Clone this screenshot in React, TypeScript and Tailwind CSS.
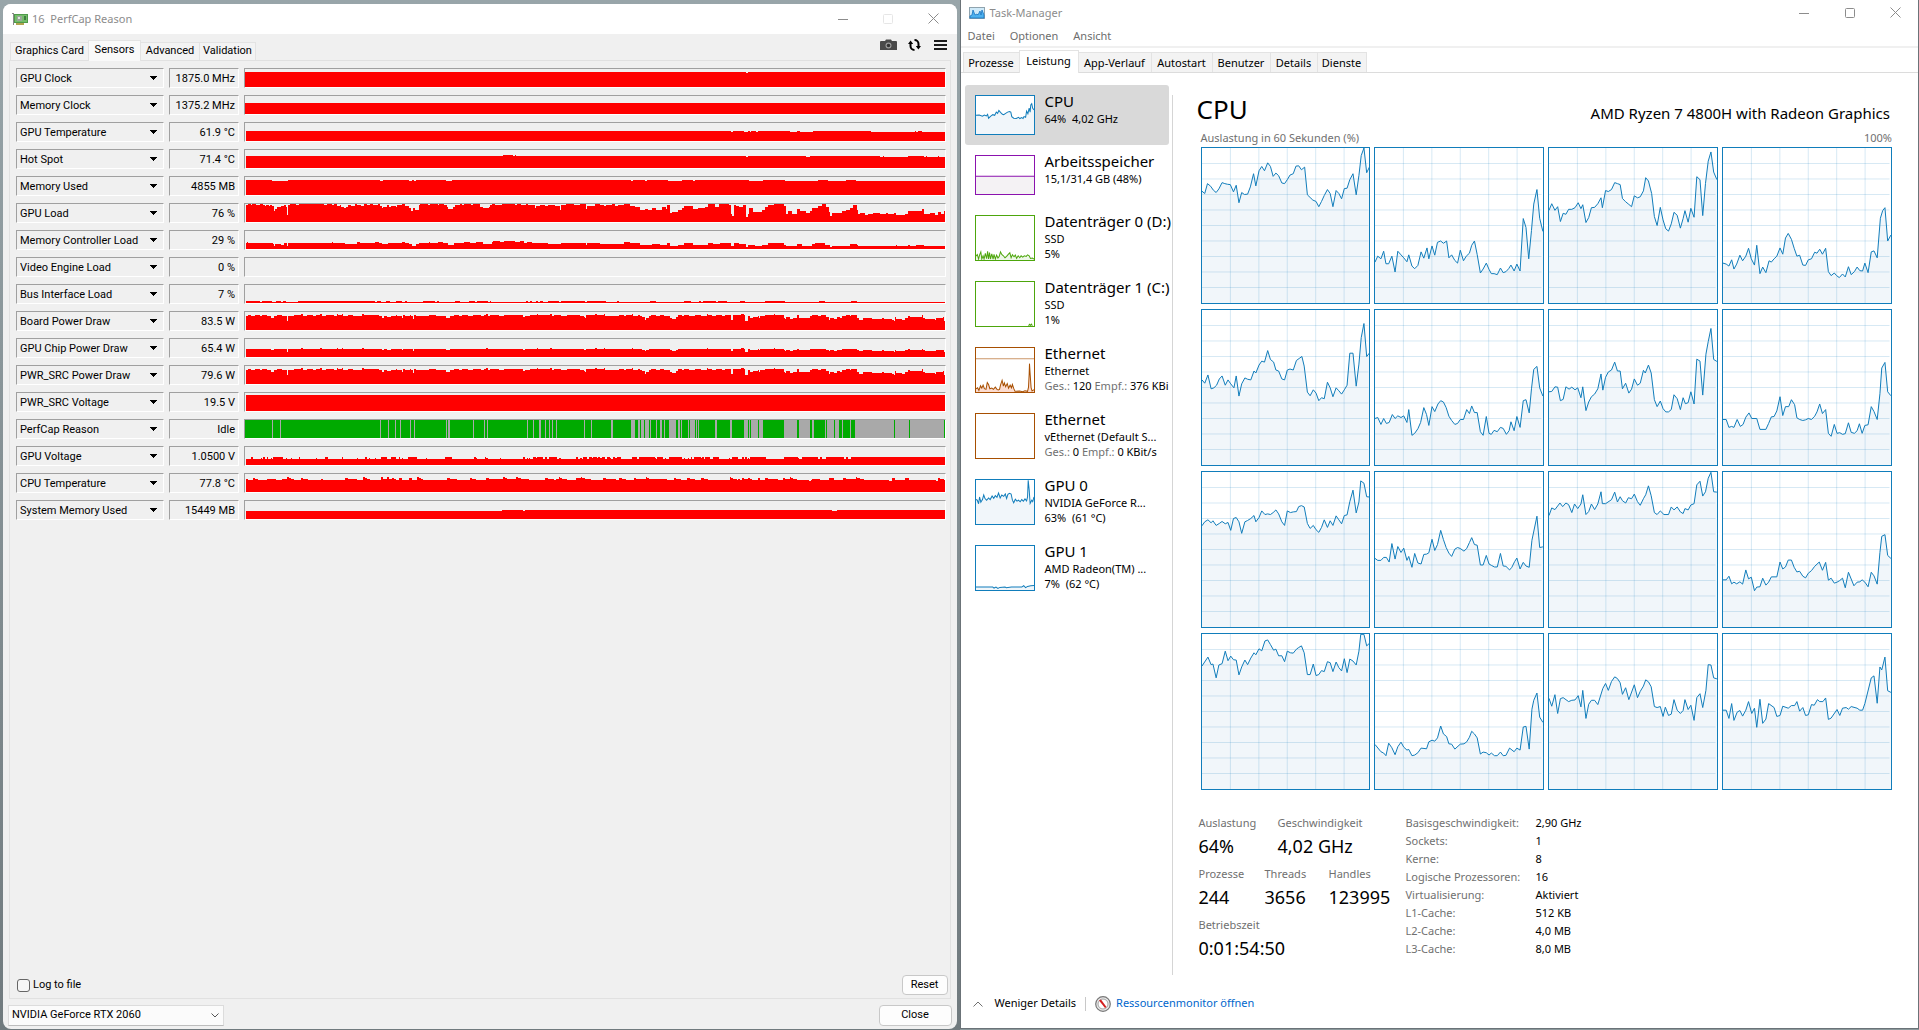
import React from "react";

/* ---------- Sensor history ---------- */

const TRACE_WIDTH = 2100;
const TRACE_HEIGHT = 54;

// Each trace is a list of "start,height" steps, split in two halves with their own origin.
type Trace = { a: string; b: string };

const BOARD_POWER: Trace = {
  a: "738,42 744,45 753,42 765,45 780,42 786,45 801,42 813,36 822,42 831,45 846,42 861,27 864,42 882,45 903,48 909,42 921,45 939,42 948,45 960,48 965,42 978,45 1002,42 1010,48 1014,45 1026,48 1030,42 1045,45 1060,42 1086,48 1092,45 1138,42 1146,36 1152,42 1160,39 1173,42 1188,45 1192,42 1205,36 1209,45 1215,42 1230,45 1233,42 1240,33 1243,45 1248,42 1287,45 1308,42 1338,36 1350,42 1362,45 1376,42 1386,45 1404,42 1420,45",
  b: "0,45 4,42 12,45 20,48 24,42 30,45 57,42 72,45 130,39 135,42 150,45 171,48 175,45 210,48 216,42 222,45 243,42 261,45 300,42 312,39 316,36 318,45 345,48 351,45 372,48 375,42 417,45 432,42 440,45 456,48 460,42 474,45 480,42 488,39 495,30 500,36 507,42 513,45 530,42 540,45 552,42 570,36 576,33 590,39 594,45 606,42 612,45 627,42 645,45 663,42 681,48 684,45 696,42 708,45 726,42 735,45 753,30 759,45 783,48 792,45 795,27 804,42 810,36 820,39 834,42 837,36 840,42 855,45 882,48 885,45 912,36 915,33 918,39 932,33 939,36 951,45 957,36 990,42 996,45 1014,42 1024,45 1040,39 1047,30 1050,36 1062,33 1071,39 1080,36 1086,42 1098,45 1110,42 1114,45 1131,36 1137,30 1150,36 1176,33 1206,36 1212,33 1236,30 1242,27 1245,39 1248,33 1266,30 1275,36 1284,42 1290,39 1326,45 1329,36 1335,33 1365,30 1368,36 1390,39 1392,27",
};

type Sensor = { name: string; value: string; trace?: Trace; scale?: number; flags?: boolean };

const SENSORS: Sensor[] = [
  { name: "GPU Clock", value: "1875.0 MHz", trace: { a: "735,45", b: "799,42 804,45" } },
  { name: "Memory Clock", value: "1375.2 MHz", trace: { a: "735,33", b: "" } },
  {
    name: "GPU Temperature",
    value: "61.9 °C",
    trace: {
      a: "738,30",
      b: "753,27 760,30 792,27 804,30 812,27 815,30 828,27 834,30 930,27 951,30 960,27 999,30 1173,27 1305,30 1308,27 1314,30 1326,27",
    },
  },
  {
    name: "Hot Spot",
    value: "71.4 °C",
    trace: {
      a: "738,36",
      b: "69,39 99,36 105,39 108,36 799,33 804,36 978,33 990,36 1200,33 1209,36 1212,33 1284,36 1332,33 1338,36 1341,33 1374,36 1377,33",
    },
  },
  {
    name: "Memory Used",
    value: "4855 MB",
    trace: {
      a: "738,45 816,42 864,45 1140,42 1149,45 1227,42 1236,45 1242,42 1248,45 1338,42 1356,45",
      b: "453,42 459,45 495,42 501,45 564,42 606,45 639,42 645,45 807,42 849,45 915,42 1014,45 1044,42 1098,45 1128,42",
    },
  },
  {
    name: "GPU Load",
    value: "76 %",
    trace: {
      a: "738,51 744,54 753,51 756,54 768,51 780,54 789,51 795,48 798,51 807,48 810,51 816,48 822,33 825,39 831,45 843,48 852,51 858,45 861,21 864,51 870,54 888,51 898,54 972,51 982,54 996,51 1002,54 1012,48 1020,51 1024,45 1032,42 1038,45 1044,51 1054,48 1066,54 1072,51 1084,48 1092,54 1102,51 1110,54 1120,51 1134,54 1140,48 1147,42 1150,45 1162,51 1168,45 1174,48 1188,45 1192,51 1206,54 1214,48 1226,42 1232,33 1238,42 1244,36 1256,51 1260,54 1284,51 1290,54 1314,51 1318,54 1332,51 1341,45 1344,39 1359,45 1365,51 1380,54 1386,51 1392,54 1412,51 1418,54",
      b: "0,45 10,42 27,45 30,51 36,54 45,51 66,54 105,51 111,54 123,51 138,54 144,51 165,42 168,48 180,51 195,48 204,51 225,48 240,36 243,51 258,54 282,51 300,54 318,39 321,48 345,54 360,51 372,48 378,51 396,54 405,48 414,51 432,54 452,48 465,45 480,36 495,39 505,36 516,42 530,36 546,45 558,39 561,51 570,27 576,30 594,36 606,42 612,48 639,39 655,42 676,45 684,54 705,45 718,54 748,51 753,24 756,18 762,51 768,48 777,45 789,51 798,15 804,24 808,42 820,30 846,36 855,45 864,51 882,54 912,48 918,24 924,33 936,24 951,39 960,33 978,27 990,33 996,42 1014,48 1026,54 1038,45 1047,30 1050,18 1056,27 1086,33 1098,36 1110,42 1119,51 1131,36 1134,24 1140,27 1155,21 1164,24 1181,27 1200,24 1218,27 1224,24 1242,27 1248,21 1275,24 1284,33 1326,39 1332,24 1350,27 1365,21 1374,30 1383,24 1392,33",
    },
  },
  {
    name: "Memory Controller Load",
    value: "29 %",
    trace: {
      a: "738,18 741,21 744,18 820,15 822,9 825,15 843,12 852,18 861,9 864,18 996,21 999,18 1035,15 1070,21 1080,18 1125,21 1137,18 1147,15 1165,18 1206,21 1214,18 1227,15 1236,9 1248,15 1256,18 1287,21 1290,18 1314,21 1330,18 1344,12 1362,18 1392,21 1410,18 1428,21",
      b: "0,21 10,15 36,21 40,24 60,21 72,24 105,21 120,24 132,18 141,21 156,18 205,15 243,18 318,12 321,18 360,15 432,21 450,18 480,12 516,15 540,12 561,18 570,9 594,12 612,18 639,12 684,18 700,15 720,18 753,9 762,18 777,15 798,6 806,12 825,9 846,12 864,18 912,12 920,9 951,15 966,9 996,15 1005,18 1035,12 1050,6 1056,9 1110,15 1131,12 1134,9 1248,12 1251,9 1284,12 1290,9 1310,12 1332,9",
    },
  },
  { name: "Video Engine Load", value: "0 %" },
  {
    name: "Bus Interface Load",
    value: "7 %",
    trace: {
      a: "738,6 780,3 786,6 816,3 828,6 843,3 849,6 858,3 894,6 1125,3 1131,6 1143,3 1158,6 1170,3 1188,6 1206,3 1215,6 1221,3 1269,6 1305,3 1311,6 1317,3 1365,6 1380,3 1407,6 1425,3 1431,6",
      b: "24,3 30,6 33,3 138,6 144,3 150,6 156,3 168,6 174,3 180,6 189,3 204,6 237,3 243,6 315,3 321,6 378,3 411,6 417,3 510,6 528,3 612,6 633,3 657,6 663,3 669,6 708,3 714,6 741,3 780,6 795,3 855,6 915,3 1017,6 1035,3 1113,6 1131,3",
    },
  },
  { name: "Board Power Draw", value: "83.5 W", trace: BOARD_POWER },
  { name: "GPU Chip Power Draw", value: "65.4 W", trace: BOARD_POWER, scale: 0.55 },
  { name: "PWR_SRC Power Draw", value: "79.6 W", trace: BOARD_POWER },
  { name: "PWR_SRC Voltage", value: "19.5 V", trace: { a: "738,48", b: "" } },
  {
    name: "PerfCap Reason",
    value: "Idle",
    flags: true,
    trace: {
      a: "735,54 816,0 819,54 840,0 843,54 1140,0 1143,54 1164,0 1167,54 1185,0 1188,54 1200,0 1203,54 1230,0 1233,54 1242,0 1245,54 1338,0 1341,54 1344,0 1350,54 1419,0 1422,54",
      b: "12,0 15,54 21,0 24,54 141,0 144,54 159,0 162,54 177,0 183,54 195,0 198,54 207,0 210,54 216,0 219,54 228,0 231,54 312,0 315,54 333,0 336,54 393,0 399,54 453,0 465,54 474,0 480,54 483,0 492,54 495,0 507,54 510,0 513,54 528,0 531,54 540,0 546,54 552,0 555,54 567,0 588,54 594,0 600,54 603,0 606,54 624,0 627,54 630,0 645,54 648,0 651,54 654,0 657,54 705,0 711,54 750,0 756,54 792,0 804,54 807,0 810,54 813,0 834,54 837,0 849,54 912,0 951,54 957,0 990,54 996,0 1002,54 1035,0 1038,54 1041,0 1062,54 1065,0 1077,54 1086,0 1089,54 1110,0 1113,54 1125,0 1242,54 1245,0 1287,54 1290,0 1392,54",
    },
  },
  {
    name: "GPU Voltage",
    value: "1.0500 V",
    trace: {
      a: "738,18 753,24 759,18 783,21 786,18 789,24 795,18 801,24 804,18 813,21 816,18 819,24 849,18 858,21 861,18 873,21 876,18 897,24 900,18 948,21 952,18 975,24 984,18 1026,24 1029,18 1071,21 1074,18 1095,24 1101,18 1107,21 1110,18 1125,21 1128,18 1143,24 1161,18 1173,24 1188,18 1197,24 1200,18 1206,21 1209,18 1224,24 1251,18 1278,21 1281,18 1335,24 1356,18 1422,24 1428,21 1431,18",
      b: "15,24 18,21 24,18 60,21 63,18 129,24 135,18 141,21 144,18 147,21 150,18 159,24 168,21 171,24 189,18 195,24 201,18 207,24 231,18 237,21 243,18 288,24 294,18 300,21 306,18 309,24 321,18 327,24 336,21 339,24 351,21 354,24 360,21 366,24 375,18 381,24 390,21 393,18 399,24 405,21 411,24 423,18 456,24 471,18 477,24 525,21 528,18 531,24 549,18 555,21 558,18 567,24 606,18 612,21 615,18 624,21 627,18 633,24 636,18 642,24 663,21 666,24 672,18 675,24 690,18 699,24 717,18 747,21 750,18 756,24 774,18 786,24 792,18 795,24 801,18 804,21 807,18 810,24 858,18 912,24 954,21 957,18 966,24 1014,18 1020,24 1026,18 1038,24 1092,18 1098,24 1104,18 1113,24",
    },
  },
  {
    name: "CPU Temperature",
    value: "77.8 °C",
    trace: {
      a: "738,39 744,36 759,42 765,39 774,36 801,39 828,36 846,39 861,45 867,42 873,39 882,36 903,42 909,39 924,36 963,39 969,36 1035,42 1044,39 1072,36 1089,45 1095,42 1101,39 1110,36 1143,45 1149,39 1161,45 1167,39 1176,42 1182,39 1188,36 1197,42 1206,36 1227,42 1236,36 1251,45 1257,42 1263,39 1269,36 1341,42 1350,39 1371,36 1410,42 1416,39 1428,36",
      b: "18,42 27,39 69,45 75,42 81,39 108,45 114,42 123,39 147,36 195,42 204,39 222,36 228,39 237,45 240,42 246,39 261,36 288,42 303,45 306,42 315,39 333,36 369,42 378,39 408,36 417,42 426,39 438,36 462,42 468,39 498,45 501,42 507,39 561,36 582,42 588,39 603,36 621,42 630,39 645,36 663,42 672,39 684,36 750,45 753,42 759,39 771,36 774,39 780,36 786,42 792,39 804,42 810,39 816,36 834,42 840,36 855,42 864,39 894,36 909,42 915,39 930,45 933,42 939,39 951,36 987,33 993,36 996,39 1020,36 1047,42 1062,36 1089,42 1098,39 1128,45 1131,42 1140,39 1152,36 1227,33 1236,42 1245,36 1275,42 1287,36 1368,33 1374,42 1380,39 1392,36",
    },
  },
  { name: "System Memory Used", value: "15449 MB", trace: { a: "738,24", b: "66,27 129,24 135,27 1056,24 1071,27" } },
];

function tracePath(trace: Trace, scale = 1): string {
  const read = (text: string, shift: number) =>
    text
      .split(" ")
      .filter(Boolean)
      .map((pair) => {
        const [x, h] = pair.split(",").map(Number);
        return [x + shift, Math.round((h * scale) / 3) * 3];
      });
  const steps = [...read(trace.a, -735), ...read(trace.b, 705)];
  let d = `M${steps[0][0]} ${TRACE_HEIGHT}`;
  for (const [x, h] of steps) d += `H${x}V${TRACE_HEIGHT - h}`;
  return `${d}H${TRACE_WIDTH}V${TRACE_HEIGHT}Z`;
}

const INSET = "border border-t-[#a0a0a0] border-l-[#a0a0a0] border-r-white border-b-white";

function SensorRow({ sensor }: { sensor: Sensor }) {
  return (
    <div className="flex h-5 items-stretch">
      <div className={`relative w-[148px] ${INSET}`}>
        <select
          aria-label={sensor.name}
          className="block h-full w-full appearance-none bg-transparent pt-px pl-[3px] text-[11px] leading-4 outline-none"
        >
          <option>{sensor.name}</option>
        </select>
        <svg className="pointer-events-none absolute top-[7px] right-[6px]" width="7" height="4" viewBox="0 0 7 4" shapeRendering="crispEdges">
          <path d="M0 0H7V1H6V2H5V3H4V4H3V3H2V2H1V1H0Z" fill="#000" />
        </svg>
      </div>
      <output className={`ml-[5px] w-[70px] pt-px pr-[3px] text-right text-[11px] leading-[17px] whitespace-nowrap ${INSET}`}>{sensor.value}</output>
      <div className={`ml-[5px] min-w-0 flex-1 ${INSET} ${sensor.flags ? "bg-[#a9a9a9]" : ""}`}>
        {sensor.trace && (
          <svg className="block h-[18px] w-full" viewBox={`0 0 ${TRACE_WIDTH} ${TRACE_HEIGHT}`} preserveAspectRatio="none" shapeRendering="crispEdges">
            <path d={tracePath(sensor.trace, sensor.scale)} fill={sensor.flags ? "#00aa00" : "#ff0000"} />
          </svg>
        )}
      </div>
    </div>
  );
}

/* ---------- Window chrome ---------- */

function CaptionButtons({ className, faded }: { className: string; faded?: boolean }) {
  return (
    <div className={`flex text-[#8c8c8c] ${className}`}>
      <button aria-label="Minimieren" className="flex w-[46px] items-center justify-center">
        <svg width="10" height="10" viewBox="0 0 10 10" shapeRendering="crispEdges">
          <path d="M0 5.5H10" stroke="currentColor" />
        </svg>
      </button>
      <button aria-label="Maximieren" className={`flex w-[45px] items-center justify-center ${faded ? "text-[#e6e6e6]" : ""}`}>
        <svg width="10" height="10" viewBox="0 0 10 10" fill="none">
          <rect x="0.5" y="0.5" width="9" height="9" rx="1" stroke="currentColor" />
        </svg>
      </button>
      <button aria-label="Schließen" className="flex w-[46px] items-center justify-center">
        <svg width="11" height="11" viewBox="0 0 11 11">
          <path d="M0.5 0.5L10.5 10.5M10.5 0.5L0.5 10.5" stroke="currentColor" />
        </svg>
      </button>
    </div>
  );
}

/* ---------- GPU-Z ---------- */

function CardIcon() {
  return (
    <svg width="16" height="14" viewBox="0 0 16 14">
      <path d="M0 1h2v12H1V2H0z" fill="#8a8a8a" />
      <rect x="2" y="2" width="14" height="9" fill="#4f9a4b" />
      <rect x="3" y="3" width="12" height="7" fill="#74bd6a" />
      <rect x="5" y="4" width="5" height="5" fill="#9aa79a" />
      <rect x="6" y="5" width="2" height="2" fill="#dfe6df" />
      <rect x="12" y="4" width="2" height="4" fill="#3f7d3f" />
      <rect x="4" y="11" width="8" height="2" fill="#b2a54f" />
    </svg>
  );
}

const GPUZ_TABS = [
  { label: "Graphics Card", width: "w-[78px]" },
  { label: "Sensors", width: "w-[53px]" },
  { label: "Advanced", width: "w-[59px]" },
  { label: "Validation", width: "w-[56px]" },
];

function GpuZWindow() {
  return (
    <section className="flex flex-1 flex-col overflow-hidden rounded-lg bg-[#f0f0f0] font-['Roboto',sans-serif] text-[11px] text-black">
      <header className="flex h-[30px] shrink-0 items-stretch bg-white">
        <div className="flex flex-1 items-center pl-[9px]">
          <CardIcon />
          <h1 className="ml-1 font-['Noto_Sans',sans-serif] text-[11px] whitespace-pre text-[#8c8c8c]">{"16  PerfCap Reason"}</h1>
        </div>
        <CaptionButtons className="pb-px" faded />
      </header>

      <div className="flex h-[26px] shrink-0 items-end px-[7px]">
        <div role="tablist" className="flex flex-1 items-end">
          {GPUZ_TABS.map((tab, i) =>
            i === 1 ? (
              <button key={tab.label} role="tab" aria-selected className={`relative z-10 -mb-px h-[21px] border border-b-0 border-[#e3e3e3] bg-[#f9f9f9] pb-[2px] text-[11px] ${tab.width}`}>
                {tab.label}
              </button>
            ) : (
              <button key={tab.label} role="tab" className={`h-[18px] border border-b-0 border-[#e3e3e3] bg-[#f3f3f3] text-[11px] whitespace-nowrap ${i === 0 ? "border-r-0" : "border-l-0"} ${tab.width}`}>
                {tab.label}
              </button>
            )
          )}
        </div>
        <div className="flex items-center gap-[11px] self-start pt-[5px] pr-[3px]">
          <button aria-label="Screenshot">
            <svg width="17" height="12" viewBox="0 0 17 12">
              <path d="M1 2h4l1-1.500h5L12 2h4a1 1 0 011 1v8H0V3a1 1 0 011-1z" fill="#4a4a4a" />
              <circle cx="8.500" cy="6.500" r="3" fill="#9a9a9a" />
              <circle cx="8.500" cy="6.500" r="1.800" fill="#333" />
            </svg>
          </button>
          <button aria-label="Refresh">
            <svg width="13" height="12" viewBox="0 0 13 12" fill="none" stroke="#000" strokeWidth="2">
              <path d="M2.500 4.500V7a4 4 0 004 4M6.500 1a4 4 0 014 4v2.500" />
              <path d="M0 5L2.600 1.500L5.200 5zM7.800 7L10.400 10.500L13 7z" fill="#000" stroke="none" />
            </svg>
          </button>
          <button aria-label="Menu" className="ml-[2px]">
            <svg width="13" height="12" viewBox="0 0 13 12" shapeRendering="crispEdges">
              <path d="M0 1h13v2H0zM0 5h13v2H0zM0 9h13v2H0z" fill="#1a1a1a" />
            </svg>
          </button>
        </div>
      </div>

      <div className="mx-[6px] flex flex-1 flex-col border border-[#e1e1e1] pb-[3px]">
        <div className="flex flex-col gap-[7px] pt-[7px] pr-[4px] pl-[6px]">
          {SENSORS.map((sensor) => (
            <SensorRow key={sensor.name} sensor={sensor} />
          ))}
        </div>
        <div className="mt-auto flex items-center justify-between pr-[2px] pl-[7px]">
          <label className="flex items-center gap-[3px]">
            <input type="checkbox" className="h-[13px] w-[13px] appearance-none rounded-[3px] border border-[#666] bg-[#f6f6f6]" />
            Log to file
          </label>
          <button className="h-5 w-[46px] rounded-[4px] border border-[#c8c8c8] bg-[#fdfdfd]">Reset</button>
        </div>
      </div>

      <footer className="flex h-[30px] shrink-0 items-start justify-between px-[5px] pt-[6px]">
        <div className="relative">
          <select aria-label="Grafikkarte" className="block h-[21px] w-[216px] appearance-none border border-[#dcdcdc] border-b-[#bdbdbd] bg-[#fbfbfb] pl-[3px] text-[11px]">
            <option>NVIDIA GeForce RTX 2060</option>
          </select>
          <svg className="pointer-events-none absolute top-2 right-[5px]" width="8" height="5" viewBox="0 0 8 5" fill="none" stroke="#555">
            <path d="M0.500 0.500L4 4L7.500 0.500" />
          </svg>
        </div>
        <button className="h-[21px] w-[73px] rounded-[4px] border border-[#c8c8c8] bg-[#fdfdfd]">Close</button>
      </footer>
    </section>
  );
}

/* ---------- Task manager ---------- */

const CORE_COLUMNS = [23, 402, 781, 1160];
const CORE_ROWS = [52, 536, 31, 517];
const CORE_LINES = [
  "23,183 29,190 35,160 42,168 48,180 54,187 60,176 67,157 73,160 79,162 85,163 92,185 98,165 104,218 110,187 116,193 123,192 129,170 136,130 141,167 148,121 154,108 160,121 167,97 173,108 179,138 185,128 191,136 198,158 204,160 210,148 216,134 223,130 229,107 235,106 241,118 248,110 254,194 260,202 266,210 273,214 279,230 285,214 291,196 298,178 304,190 310,230 317,181 323,190 329,206 335,175 341,174 347,148 354,130 361,194 367,135 372,75 378,52 384,127 391,107",
  "402,398 408,380 415,388 421,365 426,403 432,403 439,380 446,428 452,365 459,376 465,385 472,397 476,376 483,410 489,418 496,408 503,367 509,386 516,355 520,388 527,349 533,377 539,338 546,334 552,341 559,334 564,385 570,376 577,393 583,401 589,362 596,394 602,380 609,371 614,347 620,334 626,375 633,431 639,419 646,401 652,420 657,433 663,433 670,436 677,416 683,430 689,427 695,418 700,407 707,425 713,404 720,425 727,266 733,293 739,388 745,302 750,222 757,178 763,265 770,305",
  "781,241 787,221 794,241 800,230 806,275 812,250 818,253 824,238 831,238 838,233 845,218 851,236 855,224 862,278 868,263 874,233 881,232 888,221 895,203 898,233 905,181 911,184 918,178 925,157 931,160 937,163 942,205 949,215 956,223 962,230 968,197 975,203 981,200 988,182 993,142 999,152 1006,190 1012,260 1018,287 1025,232 1031,270 1037,297 1043,304 1049,282 1055,247 1062,256 1069,295 1075,266 1079,242 1086,277 1092,235 1099,262 1105,139 1112,148 1118,257 1124,160 1130,92 1136,64 1142,125 1149,148",
  "1160,401 1167,404 1173,410 1179,391 1184,419 1190,404 1197,377 1203,394 1210,380 1216,356 1222,388 1229,407 1234,347 1241,433 1247,413 1254,430 1261,394 1266,398 1272,388 1278,380 1285,355 1291,374 1297,325 1303,311 1310,329 1316,356 1322,380 1328,377 1335,407 1341,408 1347,391 1354,388 1361,368 1366,371 1372,359 1378,374 1385,356 1391,427 1397,439 1404,431 1409,439 1415,445 1422,434 1428,443 1435,412 1441,436 1448,427 1454,413 1460,424 1466,425 1471,401 1478,430 1485,367 1491,364 1498,385 1505,265 1510,242 1515,233 1521,334 1528,316",
  "23,748 29,758 36,733 43,775 49,772 55,764 61,745 67,736 74,764 80,748 86,760 93,772 98,736 104,797 110,760 117,742 123,746 130,748 137,721 141,727 148,703 154,691 160,694 167,659 173,686 180,694 185,718 191,721 198,745 204,748 210,718 216,715 223,718 230,689 236,683 242,677 247,706 254,785 260,796 267,778 273,788 279,811 285,802 291,805 298,755 304,772 310,799 317,772 323,781 329,791 335,778 341,764 347,667 354,667 361,767 367,700 372,620 378,577 384,677 391,665",
  "402,865 408,862 415,883 421,865 427,880 433,877 440,853 446,865 452,857 459,862 465,857 472,877 476,838 483,916 489,910 496,896 502,877 509,832 515,853 520,886 527,829 533,844 540,821 546,811 552,815 558,832 564,858 570,871 577,883 583,880 589,868 596,868 603,838 609,850 614,827 620,847 626,847 633,905 639,916 646,859 652,910 657,913 663,901 670,905 677,892 683,895 690,913 696,902 700,875 707,902 713,859 720,892 727,811 733,808 740,848 745,775 750,716 757,707 763,772 770,797",
  "781,784 787,783 794,769 800,770 806,811 812,807 818,769 825,776 831,770 838,778 844,772 851,802 855,769 862,841 868,815 874,799 881,791 888,775 895,730 899,779 905,740 911,724 918,718 925,694 931,721 937,721 942,775 949,758 956,788 962,776 968,745 975,764 981,758 988,719 992,727 999,703 1005,727 1012,808 1018,829 1025,812 1031,835 1037,845 1043,845 1049,838 1055,793 1062,805 1069,838 1075,802 1080,820 1086,817 1092,784 1099,821 1105,685 1112,691 1118,794 1125,670 1130,632 1136,592 1142,686 1149,692",
  "1160,868 1167,868 1173,892 1179,889 1184,892 1191,868 1198,889 1204,883 1210,861 1217,848 1223,865 1234,865 1241,898 1254,898 1260,880 1266,860 1272,859 1278,842 1285,799 1291,856 1297,829 1304,829 1310,808 1317,823 1322,863 1328,868 1335,871 1341,869 1347,865 1354,868 1361,858 1366,845 1372,821 1378,850 1385,838 1391,910 1397,919 1404,883 1410,910 1416,908 1422,913 1428,911 1435,878 1441,907 1448,910 1454,902 1459,881 1465,910 1471,886 1478,884 1485,829 1491,844 1498,868 1504,790 1508,712 1515,695 1521,784 1528,796",
  "23,194 29,182 36,176 43,185 47,179 54,193 61,187 67,181 74,188 80,184 86,208 92,172 98,169 104,182 110,217 117,182 123,178 130,172 137,163 141,182 148,169 154,149 161,160 167,158 173,160 179,154 185,146 191,158 198,182 204,193 210,149 217,154 223,152 230,151 235,136 241,133 247,137 254,187 260,202 267,193 273,206 279,214 285,199 291,176 298,199 304,179 310,193 317,164 323,176 329,188 335,163 341,161 347,121 354,86 361,155 367,122 371,58 378,65 384,106 391,107",
  "402,293 408,299 415,299 421,290 427,290 433,304 439,248 446,295 452,257 459,275 465,262 472,299 476,287 483,320 489,278 496,307 503,310 509,281 515,280 520,276 527,235 533,269 539,251 546,208 552,236 558,260 564,277 570,287 577,265 583,260 589,263 597,271 603,263 609,245 614,230 620,251 626,253 633,313 639,313 646,284 652,310 657,314 664,319 670,319 677,278 683,316 689,317 697,328 702,320 708,303 713,292 720,325 727,305 733,316 740,320 746,238 757,165 763,260 770,258",
  "781,163 787,140 794,145 805,125 811,136 818,125 824,130 831,154 837,128 844,142 851,128 855,100 862,160 868,151 874,128 881,145 888,128 895,91 898,127 905,127 918,115 925,92 931,122 937,106 942,118 949,125 955,109 962,112 968,98 975,121 981,132 988,112 993,100 999,73 1005,103 1012,154 1018,160 1025,149 1033,160 1043,160 1049,137 1055,146 1062,137 1069,152 1075,157 1079,142 1086,146 1092,131 1099,127 1105,70 1112,59 1118,104 1124,91 1130,50 1136,32 1142,91 1149,92",
  "1160,358 1167,358 1173,347 1179,370 1184,365 1190,370 1197,364 1203,371 1210,328 1216,355 1222,350 1229,391 1234,380 1241,379 1247,353 1254,374 1260,365 1266,349 1278,349 1285,304 1291,325 1297,319 1303,298 1310,298 1316,320 1322,334 1328,332 1335,347 1341,352 1347,338 1354,330 1361,317 1371,304 1378,329 1385,305 1391,359 1397,353 1404,368 1410,365 1415,361 1422,353 1428,382 1435,335 1447,376 1454,365 1460,364 1465,358 1471,365 1478,379 1485,335 1491,346 1498,371 1504,275 1508,226 1515,221 1521,284 1528,293",
  "23,614 36,587 43,610 47,608 54,650 60,611 67,607 74,569 80,598 86,584 92,595 98,596 104,641 110,617 117,596 123,610 130,590 137,574 141,580 148,562 154,568 161,538 167,535 173,549 180,566 185,563 191,583 198,583 204,601 210,569 217,574 223,575 230,563 235,558 241,553 247,574 254,640 260,640 267,608 273,643 279,640 285,628 291,631 298,601 304,604 310,631 317,602 323,619 329,629 335,592 341,634 347,593 354,599 361,611 367,569 371,518 378,518 384,553 391,544",
  "402,852 415,874 421,878 426,886 432,848 439,862 446,883 452,859 459,845 465,860 472,869 476,867 483,886 489,884 496,877 503,863 515,865 520,844 527,839 533,842 539,832 546,796 552,820 559,828 564,850 570,851 577,866 589,851 597,850 603,844 609,830 614,812 620,820 626,832 633,881 639,875 646,877 652,884 657,878 664,886 670,886 677,875 683,886 689,885 697,863 707,874 713,863 720,869 727,799 733,797 740,866 746,745 750,718 757,696 763,769 770,785",
  "781,712 787,736 794,701 800,758 806,713 812,710 824,722 831,718 838,717 845,704 851,738 855,688 862,773 868,730 874,718 881,718 888,731 899,682 905,667 911,688 918,661 925,647 931,652 937,665 942,700 949,680 956,716 968,671 975,710 981,691 988,675 993,656 999,662 1005,677 1012,737 1018,740 1025,737 1031,767 1036,739 1043,764 1049,760 1055,716 1062,748 1069,758 1075,749 1079,716 1086,746 1092,733 1099,779 1105,710 1112,698 1118,740 1125,688 1130,610 1136,611 1142,650 1149,653",
  "1160,748 1167,748 1173,773 1179,728 1184,779 1191,754 1197,749 1203,766 1210,748 1216,722 1223,758 1229,742 1234,800 1241,715 1247,788 1254,775 1260,728 1272,740 1278,767 1285,764 1291,736 1303,742 1310,734 1317,734 1322,722 1328,751 1335,740 1341,764 1347,762 1354,731 1360,733 1367,716 1372,722 1379,722 1385,711 1391,776 1397,772 1410,746 1416,764 1422,742 1430,740 1435,745 1441,737 1454,742 1460,748 1466,748 1471,728 1485,650 1491,644 1498,727 1504,617 1508,626 1515,587 1521,689 1528,694",
];

function CoreChart({ index }: { index: number }) {
  const x = CORE_COLUMNS[index % 4];
  const y = CORE_ROWS[Math.floor(index / 4)];
  const w = 368;
  const h = 470;
  const line = CORE_LINES[index];
  let grid = "";
  for (let i = 1; i <= 5; i++) grid += `M${x + i * 62.300} ${y}V${y + h}`;
  for (let i = 1; i <= 9; i++) grid += `M${x} ${y + i * 47}H${x + w - 3}`;
  return (
    <div className="h-[157px] border border-[#117dbb]">
      <svg className="block h-full w-full" viewBox={`${x} ${y} ${w} ${h}`} preserveAspectRatio="none" fill="none">
        <polygon points={`${x},${y + h} ${line} ${x + w},${y + h}`} fill="#f1f6fa" />
        <path d={grid} stroke="#117dbb" strokeOpacity="0.17" vectorEffect="non-scaling-stroke" shapeRendering="crispEdges" />
        <polyline points={line} stroke="#117dbb" vectorEffect="non-scaling-stroke" />
      </svg>
    </div>
  );
}

type Resource = {
  title: string;
  lines: React.ReactNode[];
  border: string;
  stroke: string;
  fill: string;
  line?: string;
  extra?: string;
};

const Muted = ({ children }: { children: string }) => <span className="text-[#707070]">{children}</span>;

// Thumbnails are drawn in a space of 180 × 135 units (118 high for one-line entries).
const RESOURCES: Resource[] = [
  {
    title: "CPU",
    lines: ["64%  4,02 GHz"],
    border: "border-[#117dbb]",
    stroke: "#117dbb",
    fill: "#f1f6fa",
    line: "0,60 10,59 20,63 26,59 32,62 36,57 39,69 45,63 52,58 58,60 63,50 67,54 71,45 76,51 82,57 86,58 92,54 98,50 104,48 108,50 111,64 117,69 125,70 132,66 136,70 142,67 146,70 149,64 154,66 157,47 161,55 165,38 168,50 170,28 173,24 176,38 180,43",
  },
  {
    title: "Arbeitsspeicher",
    lines: ["15,1/31,4 GB (48%)"],
    border: "border-[#8b12ae]",
    stroke: "#8b12ae",
    fill: "#f4f2f4",
    line: "0,63 180,63",
  },
  {
    title: "Datenträger 0 (D:)",
    lines: ["SSD", "5%"],
    border: "border-[#4da60c]",
    stroke: "#4da60c",
    fill: "#eef7e8",
    line: "0,123 4,118 8,132 11,120 15,110 18,132 22,122 25,132 29,115 33,131 36,108 39,132 42,112 45,132 49,116 53,132 56,118 60,132 64,120 68,129 72,124 76,110 80,118 85,122 90,128 95,124 100,118 105,113 109,128 113,119 118,125 122,120 126,130 131,122 136,128 140,122 145,126 150,122 156,124 160,119 165,122 169,130 175,129 180,132",
  },
  {
    title: "Datenträger 1 (C:)",
    lines: ["SSD", "1%"],
    border: "border-[#4da60c]",
    stroke: "#4da60c",
    fill: "#eef7e8",
    line: "163,134 166,130 169,133 172,129 175,134",
  },
  {
    title: "Ethernet",
    lines: [
      "Ethernet",
      <span key="rate">
        <Muted>Ges.:</Muted> 120 <Muted>Empf.:</Muted> 376 KBi
      </span>,
    ],
    border: "border-[#a74f01]",
    stroke: "#a74f01",
    fill: "#fcdcd0",
    line: "0,125 5,122 9,130 14,116 18,123 22,114 26,125 31,127 35,106 39,112 43,125 49,123 54,127 60,120 65,127 69,129 73,127 76,114 81,99 85,117 88,107 92,119 97,109 101,123 106,114 110,122 113,112 117,124 121,133 135,132 145,134 152,131 160,133 163,120 165,80 166,48 168,80 171,122 174,132 180,128",
    extra: "M0 33H180",
  },
  {
    title: "Ethernet",
    lines: [
      "vEthernet (Default S...",
      <span key="rate">
        <Muted>Ges.:</Muted> 0 <Muted>Empf.:</Muted> 0 KBit/s
      </span>,
    ],
    border: "border-[#a74f01]",
    stroke: "#a74f01",
    fill: "none",
  },
  {
    title: "GPU 0",
    lines: ["NVIDIA GeForce R...", "63%  (61 °C)"],
    border: "border-[#117dbb]",
    stroke: "#117dbb",
    fill: "#f1f6fa",
    line: "0,60 4,62 8,73 11,52 15,68 20,60 24,46 28,57 33,62 39,55 44,60 50,49 55,56 60,48 65,53 70,40 75,55 80,46 86,50 91,43 95,57 99,44 104,41 109,43 113,62 117,70 122,59 127,65 132,62 137,67 142,60 147,65 152,58 157,64 160,52 162,1 165,30 168,72 173,62 176,66 180,52",
  },
  {
    title: "GPU 1",
    lines: ["AMD Radeon(TM) ...", "7%  (62 °C)"],
    border: "border-[#117dbb]",
    stroke: "#117dbb",
    fill: "#f1f6fa",
    line: "0,126 52,126 56,129 62,126 68,130 74,127 90,126 94,128 110,126 142,126 148,122 154,128 160,124 170,122 180,121",
  },
];

function ResourceItem({ item, selected }: { item: Resource; selected: boolean }) {
  const compact = item.lines.length === 1;
  const h = compact ? 118 : 135;
  const points = item.line?.split(" ") ?? [];
  const first = points[0]?.split(",")[0];
  const last = points[points.length - 1]?.split(",")[0];
  return (
    <button className={`flex w-full items-start rounded-[3px] pt-[10px] pl-[10px] text-left ${compact ? "h-[60px]" : "h-[66px]"} ${selected ? "bg-[#d9d9d9]" : ""}`}>
      <span className={`block w-[60px] shrink-0 border bg-white ${compact ? "h-[40px]" : "h-[46px]"} ${item.border}`}>
        {item.line && (
          <svg className="block h-full w-full" viewBox={`0 0 180 ${h}`} preserveAspectRatio="none" fill="none">
            <polygon points={`${first},${h} ${item.line} ${last},${h}`} fill={item.fill} />
            {item.extra && <path d={item.extra} stroke={item.stroke} strokeOpacity="0.6" vectorEffect="non-scaling-stroke" />}
            <polyline points={item.line} stroke={item.stroke} vectorEffect="non-scaling-stroke" />
          </svg>
        )}
      </span>
      <span className="ml-[10px] -mt-[3px] block min-w-0 whitespace-pre">
        <span className="block text-[15px] leading-[19px]">{item.title}</span>
        {item.lines.map((line, i) => (
          <span key={i} className="block text-[11px] leading-[15px]">
            {line}
          </span>
        ))}
      </span>
    </button>
  );
}

const TM_TABS = [
  { label: "Prozesse", width: "w-[56px]" },
  { label: "Leistung", width: "w-[60px]" },
  { label: "App-Verlauf", width: "w-[73px]" },
  { label: "Autostart", width: "w-[61px]" },
  { label: "Benutzer", width: "w-[58px]" },
  { label: "Details", width: "w-[47px]" },
  { label: "Dienste", width: "w-[49px]" },
];

const DETAILS = [
  ["Basisgeschwindigkeit:", "2,90 GHz"],
  ["Sockets:", "1"],
  ["Kerne:", "8"],
  ["Logische Prozessoren:", "16"],
  ["Virtualisierung:", "Aktiviert"],
  ["L1-Cache:", "512 KB"],
  ["L2-Cache:", "4,0 MB"],
  ["L3-Cache:", "8,0 MB"],
];

function Stat({ label, value, className = "" }: { label: string; value: string; className?: string }) {
  return (
    <div className={className}>
      <div className="text-[11px] leading-5 text-[#707070]">{label}</div>
      <div className="text-[18px] leading-[26px]">{value}</div>
    </div>
  );
}

function TaskManagerWindow() {
  return (
    <section className="flex min-w-0 flex-1 flex-col border-r border-b border-l border-[#6b7378] bg-white font-['Noto_Sans',sans-serif] text-[11px] text-black">
      <header className="flex h-[26px] shrink-0 items-stretch">
        <div className="flex flex-1 items-center gap-[5px] pl-2">
          <svg width="16" height="12" viewBox="0 0 16 12">
            <rect x="0.500" y="0.500" width="15" height="11" fill="#cfeaf9" stroke="#8fa3ae" />
            <path d="M1 9L3 8L4 3L6 8L8 7L9 8L11 4L12 8L13 3L15 8V11H1Z" fill="#4db1ee" stroke="#1673c2" strokeWidth="0.800" />
          </svg>
          <h1 className="text-[11px] text-[#8c8c8c]">Task-Manager</h1>
        </div>
        <CaptionButtons className="pb-px" />
      </header>
      <nav className="flex h-[22px] shrink-0 items-center gap-[15px] border-b-2 border-[#f0f0f0] pl-[7px] text-[#6d6d6d]">
        <button>Datei</button>
        <button>Optionen</button>
        <button>Ansicht</button>
      </nav>
      <div role="tablist" className="flex h-[25px] shrink-0 items-end border-b border-[#dcdcdc] pl-[2px]">
        {TM_TABS.map((tab, i) =>
          i === 1 ? (
            <button key={tab.label} role="tab" aria-selected className={`relative -mb-px h-[23px] border border-b-0 border-[#e3e3e3] bg-white pb-[2px] whitespace-nowrap ${tab.width}`}>
              {tab.label}
            </button>
          ) : (
            <button key={tab.label} role="tab" className={`h-5 border border-b-0 border-[#e3e3e3] bg-[#f3f3f3] pt-px whitespace-nowrap ${i === 0 ? "border-r-0" : "border-l-0"} ${tab.width}`}>
              {tab.label}
            </button>
          )
        )}
      </div>

      <div className="flex flex-1">
        <aside className="w-[211px] shrink-0 overflow-hidden pt-3 pl-1">
          <div className="w-[204px]">
            {RESOURCES.map((item, i) => (
              <ResourceItem key={i} item={item} selected={i === 0} />
            ))}
          </div>
        </aside>
        <div className="mt-[22px] mb-1 w-px bg-[#d5d5d5]" />
        <main className="min-w-0 flex-1 pt-4 pr-[26px] pl-7">
          <div className="flex items-center justify-between">
            <h2 className="-ml-1 text-[26px] leading-10">CPU</h2>
            <p className="pt-2 pr-[2px] text-[15px]">AMD Ryzen 7 4800H with Radeon Graphics</p>
          </div>
          <div className="flex items-end justify-between leading-[18px] text-[#707070]">
            <span>Auslastung in 60 Sekunden (%)</span>
            <span>100%</span>
          </div>
          <div className="grid grid-cols-4 gap-x-1 gap-y-[5px]">
            {CORE_LINES.map((_, i) => (
              <CoreChart key={i} index={i} />
            ))}
          </div>
          <div className="mt-[23px] flex items-start">
            <div className="-ml-[2px] flex w-[207px] flex-col gap-[5px]">
              <div className="flex">
                <Stat className="w-[79px]" label="Auslastung" value="64%" />
                <Stat label="Geschwindigkeit" value="4,02 GHz" />
              </div>
              <div className="flex">
                <Stat className="w-[66px]" label="Prozesse" value="244" />
                <Stat className="w-[64px]" label="Threads" value="3656" />
                <Stat label="Handles" value="123995" />
              </div>
              <Stat label="Betriebszeit" value="0:01:54:50" />
            </div>
            <table className="mt-px border-collapse">
              <tbody>
                {DETAILS.map(([label, value]) => (
                  <tr key={label} className="h-[18px]">
                    <th scope="row" className="w-[130px] p-0 text-left font-normal whitespace-nowrap text-[#707070]">
                      {label}
                    </th>
                    <td className="p-0 whitespace-nowrap">{value}</td>
                  </tr>
                ))}
              </tbody>
            </table>
          </div>
        </main>
      </div>

      <footer className="flex h-[49px] shrink-0 items-center pl-3">
        <button className="flex items-center gap-3">
          <svg width="10" height="6" viewBox="0 0 10 6" fill="none" stroke="#707070">
            <path d="M0.500 5.500L5 1L9.500 5.500" />
          </svg>
          Weniger Details
        </button>
        <span className="mx-[9px] h-[14px] w-px bg-[#c8c8c8]" />
        <a href="#ressourcenmonitor" className="flex items-center gap-[5px] text-[#0066cc]">
          <svg width="16" height="16" viewBox="0 0 16 16">
            <circle cx="8" cy="8" r="7.300" fill="#e8e8e8" stroke="#777" strokeWidth="1.200" />
            <circle cx="8" cy="8" r="5" fill="#fff" stroke="#a3a3a3" />
            <path d="M4 4.500L6 3.500L11.500 11L10 12Z" fill="#d21f1f" />
          </svg>
          Ressourcenmonitor öffnen
        </a>
      </footer>
    </section>
  );
}

export default function App() {
  return (
    <div className="flex min-h-screen bg-[#8b999c]">
      <div className="flex w-1/2 min-w-0 bg-gradient-to-b from-[#98a5a9] to-[#707a7e] px-[3px] pt-1 pb-px">
        <GpuZWindow />
      </div>
      <div className="flex w-1/2 min-w-0 pb-px">
        <TaskManagerWindow />
      </div>
    </div>
  );
}
